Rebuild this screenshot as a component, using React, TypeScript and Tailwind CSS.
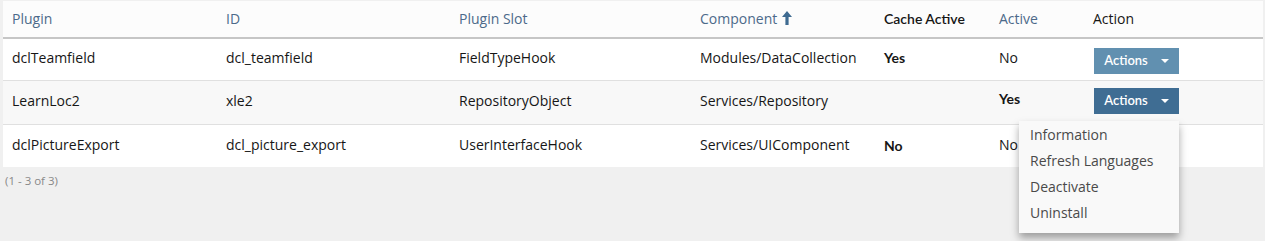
interface PluginRow {
  plugin: string;
  id: string;
  slot: string;
  component: string;
  cache: string;
  active: string;
}

const rows: PluginRow[] = [
  { plugin: 'dclTeamfield', id: 'dcl_teamfield', slot: 'FieldTypeHook', component: 'Modules/DataCollection', cache: 'Yes', active: 'No' },
  { plugin: 'LearnLoc2', id: 'xle2', slot: 'RepositoryObject', component: 'Services/Repository', cache: '', active: 'Yes' },
  { plugin: 'dclPictureExport', id: 'dcl_picture_export', slot: 'UserInterfaceHook', component: 'Services/UIComponent', cache: 'No', active: 'No' },
];

const cols = 'grid grid-cols-[214px_233px_241px_184px_115px_94px_179px]';
const alt = "font-['Lato',sans-serif]";

const Caret = () => (
  <svg width="8" height="4" viewBox="0 0 8 4" className="ml-[13px]">
    <path d="M0 0h8L4 4z" fill="#fff" />
  </svg>
);

// filled sort arrow
const SortUp = () => (
  <svg width="10" height="14" viewBox="0 0 10 14" className="ml-[5px]">
    <path d="M5 0L10 6H6.6V14H3.4V6H0z" fill="#3f6b91" />
  </svg>
);

const App = () => {
  return (
    <div className="w-[1265px] h-[241px] bg-[#f0f0f0] pt-[1px] font-['Open_Sans',sans-serif] text-[14px] text-[#161616]">
      <div className="ml-[3px] w-[1260px] bg-white">
        {/* Header */}
        <div className={`${cols} h-[38px] pb-[2px] items-center bg-[#fcfcfc] border-b-2 border-[#c6c6c6] text-[#4c6a8a]`}>
          <div className="pl-[9px]">Plugin</div>
          <div className="pl-[9px]">ID</div>
          <div className="pl-[9px]">Plugin Slot</div>
          <div className="pl-[9px] flex items-center">
            Component
            <SortUp />
          </div>
          <div className={`pl-[9px] ${alt} text-[14px] font-semibold text-[#161616]`}>Cache Active</div>
          <div className="pl-[9px]">Active</div>
          <div className="pl-[9px] text-[#161616]">Action</div>
        </div>

        {/* Rows */}
        {rows.map((r, i) => (
          <div
            key={r.id}
            className={`${cols} items-center pb-[4px] ${i === 1 ? 'h-[44px] bg-[#f8f8f8]' : 'h-[42px]'} ${i < 2 ? 'border-b border-[#e0e0e0]' : ''}`}
          >
            <div className="pl-[9px]">{r.plugin}</div>
            <div className="pl-[9px]">{r.id}</div>
            <div className="pl-[9px]">{r.slot}</div>
            <div className="pl-[9px]">{r.component}</div>
            <div className={`pl-[9px] ${alt} font-bold text-[14px] ${i === 2 ? 'pt-[3px]' : ''}`}>{r.cache}</div>
            <div className={`pl-[9px] ${r.active === 'Yes' ? `${alt} font-bold text-[14px] -mt-[4px]` : ''}`}>{r.active}</div>
            <div className="pl-[10px] relative">
              {i < 2 && (
                <button
                  className={`flex items-center justify-center w-[85px] h-[26px] ${i === 0 ? 'bg-[#6190b0] mt-[6px]' : 'bg-[#3f6d93] mt-[1px]'} text-white ${alt} text-[13px] font-semibold`}
                >
                  Actions
                  <Caret />
                </button>
              )}
              {i === 1 && (
                <div className="absolute left-[-65px] top-[34px] z-10 w-[160px] bg-[#f9f9f9] shadow-[0_5px_8px_rgba(0,0,0,0.35)] pt-[1px] pb-[7px] text-[#4a4a4a]">
                  {['Information', 'Refresh Languages', 'Deactivate', 'Uninstall'].map((item) => (
                    <div key={item} className="h-[26px] leading-[26px] pl-[11px]">{item}</div>
                  ))}
                </div>
              )}
            </div>
          </div>
        ))}
      </div>
      <div className="pl-[5px] pt-[5px] text-[11.5px] text-[#888]">(1 - 3 of 3)</div>
    </div>
  );
};

export default App;
